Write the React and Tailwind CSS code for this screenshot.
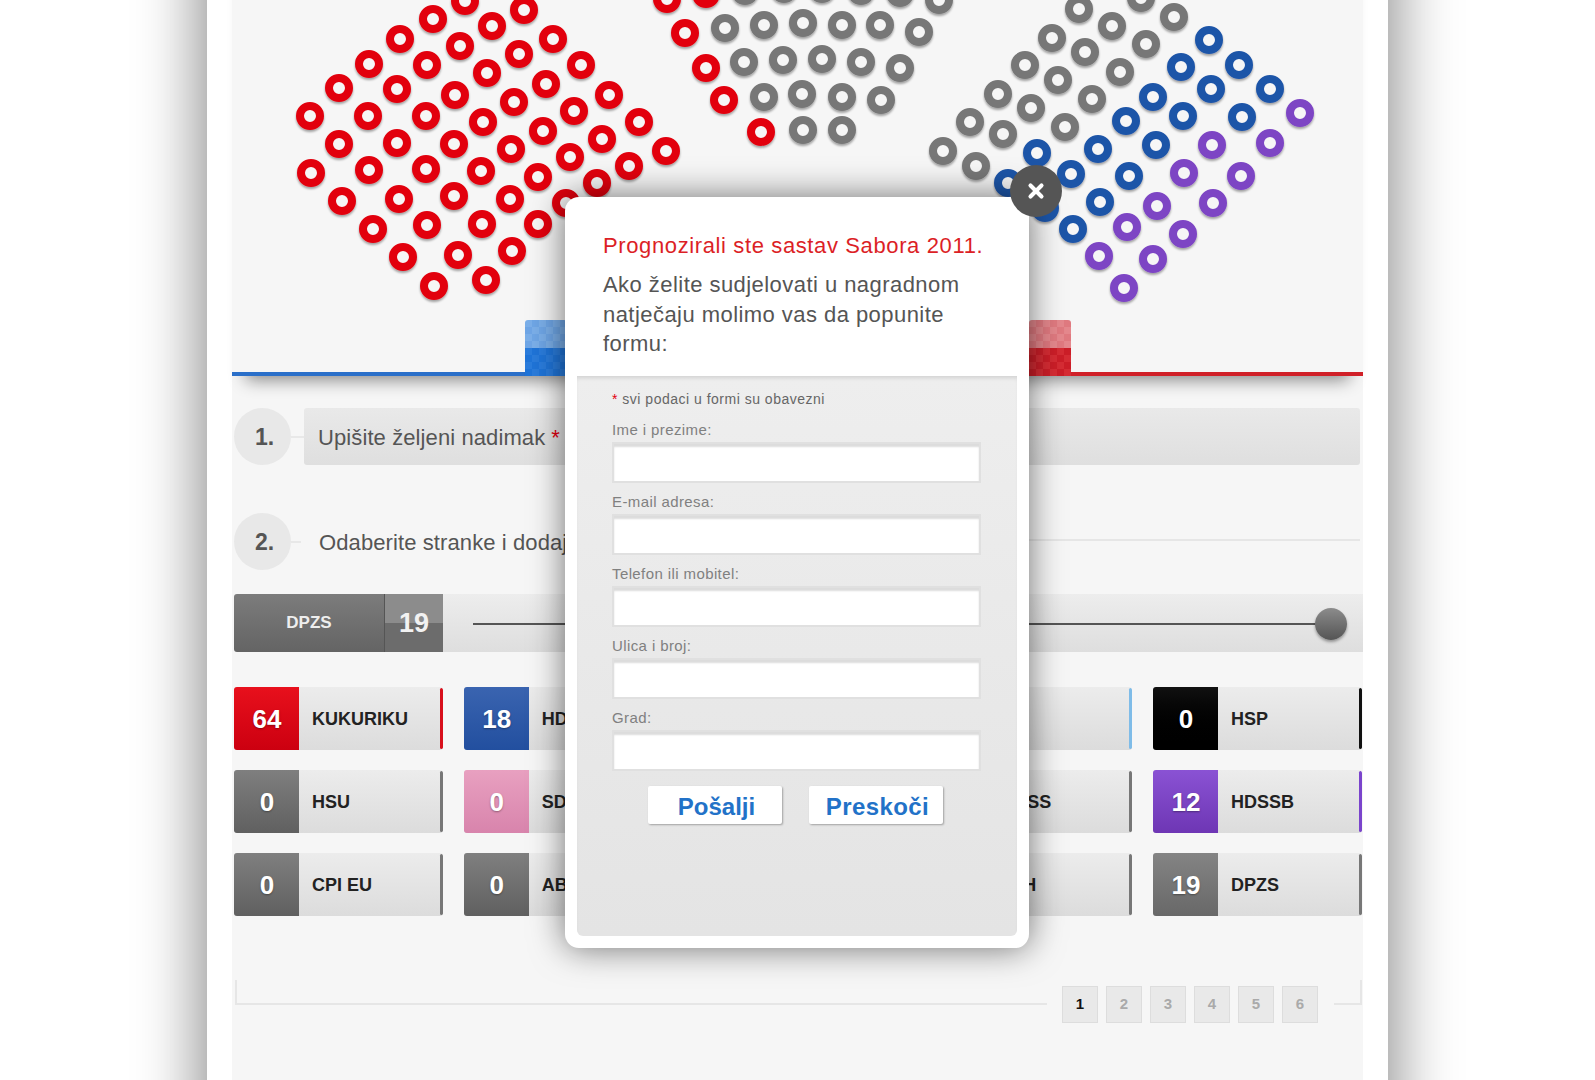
import { X } from "lucide-react";

const dots = {
  "#e2000f": [
    [465, 1], [524, 10], [433, 19], [492, 26], [553, 39], [400, 39], [460, 46], [519, 54], [581, 65], [369, 64], [427, 65], [487, 73],
    [546, 84], [609, 95], [339, 88], [397, 89], [455, 95], [514, 102], [574, 111], [639, 122], [310, 116], [368, 116], [426, 116], [483, 122],
    [543, 131], [602, 139], [666, 151], [339, 144], [397, 143], [454, 144], [511, 149], [570, 157], [629, 166], [311, 173], [369, 170], [426, 169],
    [481, 171], [538, 177], [597, 183], [342, 201], [399, 199], [454, 196], [510, 199], [566, 203], [373, 229], [427, 225], [482, 224], [538, 224],
    [403, 257], [458, 255], [512, 251], [434, 286], [486, 280], [667, -1], [706, -6], [685, 33], [706, 68], [724, 100], [761, 132],
  ],
  "#777777": [
    [745, -9], [784, -11], [822, -11], [861, -9], [900, -7], [939, 0], [725, 28], [764, 25], [803, 23], [842, 25], [880, 25], [919, 32],
    [744, 62], [783, 60], [822, 59], [861, 62], [900, 68], [764, 97], [802, 94], [842, 97], [881, 100], [803, 130], [842, 130],
    [1079, 9], [1141, -2], [1174, 17], [1112, 26], [1052, 38], [1146, 44], [1085, 52], [1025, 65], [1120, 72], [1058, 80], [998, 94],
    [1092, 99], [1031, 108], [970, 122], [1065, 127], [1003, 134], [943, 151], [976, 166],
  ],
  "#1f55a8": [
    [1209, 40], [1181, 67], [1239, 65], [1211, 89], [1270, 89], [1153, 97], [1183, 116], [1242, 117], [1126, 121], [1098, 149], [1156, 145],
    [1037, 153], [1071, 174], [1129, 176], [1008, 183], [1100, 202], [1045, 208], [1073, 229],
  ],
  "#7d45c4": [
    [1300, 113], [1270, 143], [1212, 145], [1184, 173], [1241, 176], [1157, 206], [1213, 203], [1127, 227], [1183, 234], [1099, 256], [1153, 259], [1124, 288],
  ],
};

const grayBox = "from-[#7f7f7f] to-[#606060]";
const grayStripe = "bg-[#777777]";

// the middle column sits fully behind the popup, so its cards stay empty
const parties = [
  { name: "KUKURIKU", seats: 64, box: "from-[#e8101c] to-[#cc0010]", stripe: "bg-[#d8101c]" },
  { name: "HDZ", seats: 18, box: "from-[#3a64b0] to-[#224f9f]", stripe: "bg-[#224f9f]" },
  { name: "", seats: "", box: grayBox, stripe: grayStripe },
  { name: "HL", seats: 0, box: "from-[#7fbce8] to-[#5ea4d8]", stripe: "bg-[#7fbce8]" },
  { name: "HSP", seats: 0, box: "from-[#111111] to-[#000000]", stripe: "bg-[#111111]" },
  { name: "HSU", seats: 0, box: grayBox, stripe: grayStripe },
  { name: "SDSS", seats: 0, box: "from-[#e8a0c0] to-[#d884ac]", stripe: "bg-[#d884ac]" },
  { name: "", seats: "", box: grayBox, stripe: grayStripe },
  { name: "HDSS", seats: 0, box: grayBox, stripe: grayStripe },
  { name: "HDSSB", seats: 12, box: "from-[#8a52d4] to-[#6e36b4]", stripe: "bg-[#7a44cc]" },
  { name: "CPI EU", seats: 0, box: grayBox, stripe: grayStripe },
  { name: "ABH", seats: 0, box: grayBox, stripe: grayStripe },
  { name: "", seats: "", box: grayBox, stripe: grayStripe },
  { name: "ZLH", seats: 0, box: grayBox, stripe: grayStripe },
  { name: "DPZS", seats: 19, box: "from-[#848484] to-[#686868]", stripe: grayStripe },
];

const fields = ["Ime i prezime:", "E-mail adresa:", "Telefon ili mobitel:", "Ulica i broj:", "Grad:"];

function Chart() {
  return (
    <svg viewBox="232 -60 1131 432" className="block h-[432px] w-[1131px]">
      <defs>
        <filter id="dotShadow" x="-30%" y="-30%" width="160%" height="170%">
          <feDropShadow dx="0" dy="2" stdDeviation="1.2" floodColor="#000" floodOpacity="0.35" />
        </filter>
      </defs>
      {Object.entries(dots).map(([color, list]) =>
        list.map(([cx, cy]) => (
          <circle key={color + cx + "-" + cy} cx={cx} cy={cy} r="10" fill="#f6f6f6" stroke={color} strokeWidth="8" filter="url(#dotShadow)" />
        ))
      )}
    </svg>
  );
}

function PartyCard({ party }) {
  return (
    <div className="flex h-[63px] overflow-hidden rounded-[3px] bg-gradient-to-b from-[#ececec] to-[#dcdcdc]">
      <div className={`flex w-[65px] items-center justify-center bg-gradient-to-b pt-[2px] pl-[1px] text-[26px] font-bold text-white [text-shadow:0_1px_2px_rgba(0,0,0,.35)] ${party.box}`}>
        {party.seats}
      </div>
      <div className="flex-1 pl-[13px] text-[18px] leading-[64px] font-bold text-[#222222]">{party.name}</div>
      <div className={`my-[1px] w-[3px] rounded-[2px] ${party.stripe}`} />
    </div>
  );
}

function Modal() {
  return (
    <div className="absolute top-[197px] left-[565px] flex h-[751px] w-[464px] flex-col rounded-[14px] bg-white shadow-[0_0_34px_rgba(0,0,0,.55)]">
      <button className="absolute -top-[32px] left-[445px] flex h-[52px] w-[52px] items-center justify-center rounded-full bg-[#555555] text-white">
        <X size={22} strokeWidth={4.5} />
      </button>

      <div className="h-[179px] pt-[34px] pl-[38px]">
        <h2 className="text-[22px] leading-[29px] tracking-[0.62px] text-[#dc1f26]">Prognozirali ste sastav Sabora 2011.</h2>
        <p className="mt-[10px] w-[385px] text-[22px] leading-[29.5px] tracking-[0.45px] text-[#555555]">
          Ako želite sudjelovati u nagradnom natječaju molimo vas da popunite formu:
        </p>
      </div>

      <div className="mx-[12px] mb-[12px] flex-1 rounded-b-[6px] bg-gradient-to-b from-[#eeeeee] to-[#e4e4e4] px-[35px] pt-[14px] shadow-[inset_0_4px_4px_-2px_rgba(0,0,0,.12)]">
        <div className="h-[18px] text-[14px] leading-[18px] tracking-[0.5px] text-[#666666]">
          <span className="text-[#e2000f]">*</span> svi podaci u formi su obavezni
        </div>
        <div className="mt-[12px] flex flex-col gap-[9px]">
          {fields.map((label) => (
            <label key={label} className="block">
              <span className="block h-[22px] text-[15px] leading-[20px] tracking-[0.4px] text-[#808080]">{label}</span>
              <input className="block h-[41px] w-[369px] border-2 border-[#e0e0e0] bg-white shadow-[inset_0_3px_2px_#dcdcdc]" />
            </label>
          ))}
        </div>
        <div className="mt-[15px] -ml-[4px] flex justify-center gap-[27px]">
          <button className="h-[38px] w-[134px] rounded-[2px] bg-white pt-[3px] pl-[4px] text-[24px] font-bold text-[#2272c8] shadow-[1px_1px_2px_rgba(0,0,0,.3)]">Pošalji</button>
          <button className="h-[38px] w-[134px] rounded-[2px] bg-white pt-[3px] pl-[4px] text-[24px] font-bold tracking-[0.4px] text-[#2272c8] shadow-[1px_1px_2px_rgba(0,0,0,.3)]">Preskoči</button>
        </div>
      </div>
    </div>
  );
}

export default function App() {
  return (
    <div className="relative h-screen overflow-hidden bg-white font-['Liberation_Sans',Arial,sans-serif]">
      <div className="mx-auto -mt-[60px] h-[1240px] w-[1181px] bg-white px-[25px] shadow-[0_0_56px_10px_rgba(0,0,0,.42)]">
        <div className="h-full bg-[#f6f6f6]">
          {/* Chart */}
          <div className="relative shadow-[0_18px_16px_-14px_rgba(0,0,0,.45)]">
            <Chart />
            <div className="flex h-[4px]">
              <div className="flex-1 bg-[#2a6fc9]" />
              <div className="flex-1 bg-[#d02028]" />
            </div>
            <div className="absolute bottom-0 left-[293px] flex h-[56px] w-[42px] flex-col overflow-hidden rounded-t-[3px]">
              <div className="flex-1 bg-[repeating-conic-gradient(#6fa6e6_0_25%,#7bafe9_0_50%)] bg-[length:14px_14px]" />
              <div className="flex-1 bg-[repeating-conic-gradient(#1f74d8_0_25%,#2a7cdc_0_50%)] bg-[length:14px_14px]" />
            </div>
            <div className="absolute bottom-0 left-[797px] flex h-[56px] w-[42px] flex-col overflow-hidden rounded-t-[3px]">
              <div className="flex-1 bg-[repeating-conic-gradient(#e07a80_0_25%,#e5888d_0_50%)] bg-[length:14px_14px]" />
              <div className="flex-1 bg-[repeating-conic-gradient(#cc1e28_0_25%,#d62c34_0_50%)] bg-[length:14px_14px]" />
            </div>
          </div>

          {/* Step 1 */}
          <div className="mt-[32px] flex items-center pr-[3px] pl-[2px]">
            <div className="flex h-[57px] w-[57px] items-center justify-center rounded-full bg-[#e8e8e8] pt-[2px] pl-[4px] text-[23px] font-bold text-[#555555]">1.</div>
            <div className="h-[2px] w-[13px] bg-[#e8e8e8]" />
            <div className="flex h-[57px] flex-1 items-center rounded-[3px] bg-gradient-to-b from-[#e9e9e9] to-[#dfdfdf] pt-[2px] pl-[14px] text-[22px] tracking-[0.1px] text-[#555555]">
              Upišite željeni nadimak<span className="ml-[6px] text-[#e2000f]">*</span>
            </div>
          </div>

          {/* Step 2 */}
          <div className="mt-[48px] flex items-center pr-[3px] pl-[2px]">
            <div className="flex h-[57px] w-[57px] items-center justify-center rounded-full bg-[#e8e8e8] pt-[2px] pl-[4px] text-[23px] font-bold text-[#555555]">2.</div>
            <div className="h-[2px] w-[10px] bg-[#e8e8e8]" />
            <div className="ml-[18px] pt-[2px] text-[22px] tracking-[0.1px] whitespace-nowrap text-[#555555]">Odaberite stranke i dodajte im mandate</div>
            <div className="mb-[4px] ml-[20px] h-[2px] flex-1 bg-[#e6e6e6]" />
          </div>

          {/* Slider */}
          <div className="mt-[24px] ml-[2px] flex h-[58px]">
            <div className="flex w-[151px] items-center justify-center rounded-l-[3px] border-r border-[#555555] bg-gradient-to-b from-[#7c7c7c] to-[#646464] text-[17px] font-bold text-[#eeeeee]">DPZS</div>
            <div className="flex w-[58px] items-center justify-center bg-[linear-gradient(#8c8c8c_50%,#6c6c6c_50%)] text-[27px] font-bold text-[#f2f2f2]">19</div>
            <div className="flex flex-1 items-center bg-gradient-to-b from-[#ededed] to-[#dedede] pt-[2px] pr-[16px] pl-[30px]">
              <div className="h-[2px] flex-1 bg-[#555555]" />
              <div className="-ml-[1px] h-[32px] w-[32px] rounded-full bg-gradient-to-b from-[#8c8c8c] to-[#555555] shadow-[0_2px_3px_rgba(0,0,0,.35)]" />
            </div>
          </div>

          {/* Parties */}
          <div className="mt-[35px] ml-[2px] grid grid-cols-[repeat(5,209px)] justify-between gap-y-[20px] pr-[1px]">
            {parties.map((party, index) => (
              <PartyCard key={index} party={party} />
            ))}
          </div>

          {/* Pagination */}
          <div className="mt-[64px] ml-[3px] flex items-start pr-[1px]">
            <div className="h-[25px] w-[812px] border-b-2 border-l-2 border-[#e6e6e6]" />
            <div className="ml-[15px] flex gap-[8px] pt-[6px]">
              {[1, 2, 3, 4, 5, 6].map((n) => (
                <div key={n} className={`flex h-[37px] w-[36px] items-center justify-center border border-[#dddddd] bg-[#e9e9e9] text-[15px] font-bold ${n === 1 ? "text-[#111111]" : "text-[#aaaaaa]"}`}>
                  {n}
                </div>
              ))}
            </div>
            <div className="ml-[16px] h-[25px] flex-1 border-r-2 border-b-2 border-[#e6e6e6]" />
          </div>
        </div>
      </div>

      <Modal />
    </div>
  );
}
